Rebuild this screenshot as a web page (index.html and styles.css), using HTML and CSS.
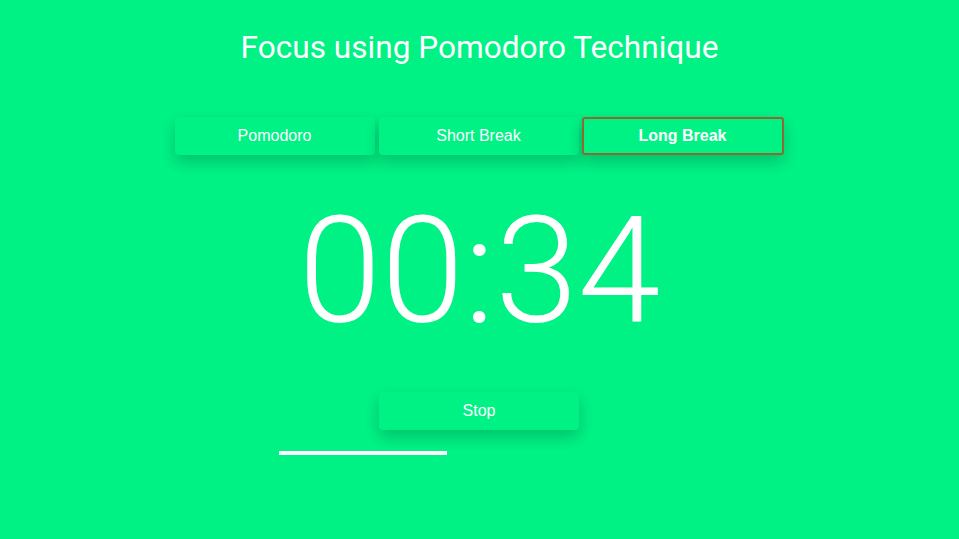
FILE: index.html
```html
<!DOCTYPE html>
<html>
<head>
<meta charset="utf-8">
<link rel="stylesheet" href="styles.css">
</head>
<body>
<main class="app">
  <h1 class="title">Focus using Pomodoro Technique</h1>
  <div class="modes">
    <button class="btn">Pomodoro</button>
    <button class="btn">Short Break</button>
    <button class="btn active">Long Break</button>
  </div>
  <div class="timer">00:34</div>
  <button class="btn stop">Stop</button>
  <div class="track"><div class="bar" style="width:168px"></div></div>
</main>
</body>
</html>
```
FILE: styles.css
```css
html, body {
  margin: 0;
  padding: 0;
  background: #00f285;
  height: 100%;
}
.app {
  display: flex;
  flex-direction: column;
  align-items: center;
  color: #fff;
}
.title {
  font-family: Roboto, sans-serif;
  font-weight: 400;
  font-size: 31.6px;
  margin: 29px 0 0;
  line-height: 38px;
}
.modes {
  display: flex;
  gap: 4px;
  margin-top: 50px;
  margin-right: 1px;
}
.btn {
  width: 200px;
  height: 38px;
  border: 2px solid transparent;
  border-radius: 4px;
  background: #00f285;
  color: #fff;
  font-family: "Liberation Sans", Arial, sans-serif;
  font-size: 16px;
  box-shadow: 0 7px 16px rgba(0, 0, 0, 0.2);
  cursor: pointer;
}
.btn.active {
  width: 202px;
  margin-left: -1px;
  border-color: #8e6a33;
  border-radius: 3px;
  font-weight: 700;
}
.timer {
  font-family: Roboto, sans-serif;
  font-weight: 300;
  font-size: 149px;
  line-height: 1;
  margin-top: 42px;
}
.stop {
  margin-top: 46px;
  margin-right: 1px;
}
.track {
  width: 400px;
  margin-top: 21px;
  margin-right: 1px;
}
.bar {
  height: 4px;
  background: #fff;
}
```
